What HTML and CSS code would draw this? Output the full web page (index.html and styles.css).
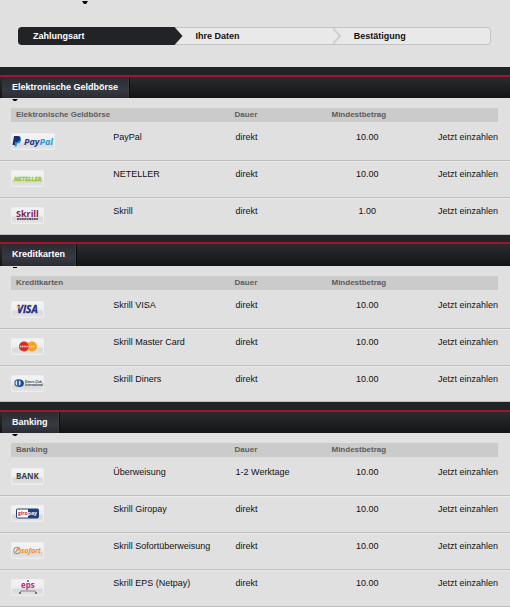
FILE: index.html
```html
<!DOCTYPE html>
<html lang="de">
<head>
  <meta charset="UTF-8" />
  <meta name="viewport" content="width=device-width, initial-scale=1.0"/>
  <title>Einzahlung | Zahlungsart</title>
  <link rel="stylesheet" href="styles.css">
</head>
<body>
  <!-- shared logo button background -->
  <svg class="defs" width="0" height="0" aria-hidden="true">
    <defs>
      <linearGradient id="plate" x1="0" y1="0" x2="0" y2="1">
        <stop offset="0" stop-color="#f4f4f4"/>
        <stop offset="0.5" stop-color="#eeeeee"/>
        <stop offset="0.65" stop-color="#d8d8d8"/>
        <stop offset="1" stop-color="#e6e6e6"/>
      </linearGradient>
    </defs>
  </svg>

  <header class="intro">
    <svg class="caret caret-top" viewBox="0 0 6 3" aria-hidden="true"><path d="M0 0h6L4 3H2z"/></svg>
    <ol class="steps">
      <li class="step active">Zahlungsart</li>
      <li class="step">Ihre Daten
        <svg class="chevron" viewBox="0 0 9 16" aria-hidden="true"><path d="M1 0L8 8L1 16" fill="none" stroke="#cfcfcf" stroke-width="2"/></svg>
      </li>
      <li class="step">Bestätigung</li>
    </ol>
  </header>

  <main>
    <section class="section">
      <div class="bar"><h2 class="tab">Elektronische Geldbörse</h2></div>
      <svg class="caret" viewBox="0 0 6 3" aria-hidden="true"><path d="M0 1h6L4 3H2z"/></svg>
      <table>
        <colgroup><col class="col-logo"><col class="col-name"><col class="col-time"><col class="col-amount"><col class="col-action"></colgroup>
        <thead>
          <tr><th colspan="2">Elektronische Geldbörse</th><th>Dauer</th><th>Mindestbetrag</th><th></th></tr>
        </thead>
        <tbody>
          <tr>
            <td class="logo">
              <svg width="44" height="17" viewBox="0 0 44 17" aria-hidden="true">
                <rect x="0.5" y="0.5" width="43" height="16" rx="1" fill="url(#plate)" stroke="#eee"/>
                <path d="M3 3h4q3 0 2.500 3Q9 9 6 9H4.500L4 12H1.500z" fill="#1d2f74"/>
                <path d="M9.500 5q1 1 .4 3Q9 10.500 6.500 10.500H6L5.500 13.500H3.500L4.500 9H6.500Q9 8.500 9.500 5z" fill="#1b8fd2"/>
                <text x="13" y="12" class="brand italic" font-size="9" fill="#243580">Pay<tspan fill="#2299d6">Pal</tspan></text>
              </svg>
            </td>
            <td>PayPal</td><td>direkt</td><td class="amount">10.00</td><td class="action"><a href="#paypal">Jetzt einzahlen</a></td>
          </tr>
          <tr>
            <td class="logo">
              <svg width="33" height="17" viewBox="0 0 33 17" aria-hidden="true">
                <rect x="0.5" y="0.5" width="32" height="16" rx="1" fill="url(#plate)" stroke="#eee"/>
                <text x="3" y="11" class="brand italic" font-size="6" fill="#8fc92f" stroke="#8fc92f" stroke-width="0.3">NETELLER</text>
              </svg>
            </td>
            <td>NETELLER</td><td>direkt</td><td class="amount">10.00</td><td class="action"><a href="#neteller">Jetzt einzahlen</a></td>
          </tr>
          <tr>
            <td class="logo">
              <svg width="33" height="17" viewBox="0 0 33 17" aria-hidden="true">
                <rect x="0.5" y="0.5" width="32" height="16" rx="1" fill="url(#plate)" stroke="#eee"/>
                <text x="5" y="10" class="brand" font-size="9" fill="#7c1d5c">Skrill</text>
                <path d="M6 12h21" stroke="#41333d" stroke-width="1.500" stroke-dasharray="2 .4"/>
              </svg>
            </td>
            <td>Skrill</td><td>direkt</td><td class="amount">1.00</td><td class="action"><a href="#skrill">Jetzt einzahlen</a></td>
          </tr>
        </tbody>
      </table>
    </section>

    <section class="section cards">
      <div class="bar"><h2 class="tab">Kreditkarten</h2></div>
      <svg class="caret" viewBox="0 0 6 3" aria-hidden="true"><path d="M1 1h4v1H1z"/></svg>
      <table>
        <colgroup><col class="col-logo"><col class="col-name"><col class="col-time"><col class="col-amount"><col class="col-action"></colgroup>
        <thead>
          <tr><th colspan="2">Kreditkarten</th><th>Dauer</th><th>Mindestbetrag</th><th></th></tr>
        </thead>
        <tbody>
          <tr>
            <td class="logo">
              <svg width="33" height="17" viewBox="0 0 33 17" aria-hidden="true">
                <rect x="0.5" y="0.5" width="32" height="16" rx="1" fill="url(#plate)" stroke="#eee"/>
                <text x="6" y="12" class="brand italic" font-size="10" fill="#1f2b87" stroke="#1f2b87" stroke-width="0.3">VISA</text>
                <path d="M5 5h3l1 3z" fill="#e9a52c"/>
              </svg>
            </td>
            <td>Skrill VISA</td><td>direkt</td><td class="amount">10.00</td><td class="action"><a href="#visa">Jetzt einzahlen</a></td>
          </tr>
          <tr>
            <td class="logo">
              <svg width="33" height="17" viewBox="0 0 33 17" aria-hidden="true">
                <rect x="0.5" y="0.5" width="32" height="16" rx="1" fill="url(#plate)" stroke="#eee"/>
                <circle cx="21" cy="8.500" r="5" fill="#f3a024"/>
                <circle cx="13" cy="8.500" r="5" fill="#d92b2b"/>
                <path d="M16.500 5h1.500M17 6.500h1.500M17 10.500h1.500M16.500 12h1.500" stroke="#f3a024"/>
                <path d="M9 8.500h15" stroke="#f6d5c2" stroke-width="1.500" stroke-dasharray="1.500 .6"/>
              </svg>
            </td>
            <td>Skrill Master Card</td><td>direkt</td><td class="amount">10.00</td><td class="action"><a href="#mastercard">Jetzt einzahlen</a></td>
          </tr>
          <tr>
            <td class="logo">
              <svg width="33" height="17" viewBox="0 0 33 17" aria-hidden="true">
                <rect x="0.5" y="0.5" width="32" height="16" rx="1" fill="url(#plate)" stroke="#eee"/>
                <path d="M7 4.500h2.500a4 3.800 0 0 1 0 7.500H7z" fill="#1b4688"/>
                <circle cx="7" cy="8" r="3.700" fill="#2d69ab"/>
                <path d="M6 5.500a2.800 2.800 0 0 0 0 5zM8 5.500a2.800 2.800 0 0 1 0 5z" fill="#e8edf3"/>
                <text x="14" y="8" font-size="3" font-weight="bold" fill="#33373f">Diners Club</text>
                <text x="14" y="11" font-size="3" font-weight="bold" fill="#33373f">International</text>
              </svg>
            </td>
            <td>Skrill Diners</td><td>direkt</td><td class="amount">10.00</td><td class="action"><a href="#diners">Jetzt einzahlen</a></td>
          </tr>
        </tbody>
      </table>
    </section>

    <section class="section">
      <div class="bar"><h2 class="tab">Banking</h2></div>
      <svg class="caret" viewBox="0 0 6 3" aria-hidden="true"><path d="M0 1h6L4 3H2z"/></svg>
      <table>
        <colgroup><col class="col-logo"><col class="col-name"><col class="col-time"><col class="col-amount"><col class="col-action"></colgroup>
        <thead>
          <tr><th colspan="2">Banking</th><th>Dauer</th><th>Mindestbetrag</th><th></th></tr>
        </thead>
        <tbody>
          <tr>
            <td class="logo">
              <svg width="33" height="17" viewBox="0 0 33 17" aria-hidden="true">
                <rect x="0.5" y="0.5" width="32" height="16" rx="1" fill="url(#plate)" stroke="#eee"/>
                <text x="5" y="11" class="brand" font-size="8" fill="#3a3d43">BANK</text>
              </svg>
            </td>
            <td>Überweisung</td><td>1-2 Werktage</td><td class="amount">10.00</td><td class="action"><a href="#bank">Jetzt einzahlen</a></td>
          </tr>
          <tr>
            <td class="logo">
              <svg width="33" height="17" viewBox="0 0 33 17" aria-hidden="true">
                <rect x="0.5" y="0.5" width="32" height="16" rx="1" fill="url(#plate)" stroke="#eee"/>
                <rect x="5.500" y="4" width="22" height="9" rx="1" fill="#fff" stroke="#1d4281"/>
                <path d="M17 4h10v9H17z" fill="#1d4281"/>
                <text x="7" y="10" class="brand" font-size="5" fill="#d4203a">giro<tspan fill="#fff">pay</tspan></text>
              </svg>
            </td>
            <td>Skrill Giropay</td><td>direkt</td><td class="amount">10.00</td><td class="action"><a href="#giropay">Jetzt einzahlen</a></td>
          </tr>
          <tr>
            <td class="logo">
              <svg width="33" height="17" viewBox="0 0 33 17" aria-hidden="true">
                <rect x="0.5" y="0.5" width="32" height="16" rx="1" fill="url(#plate)" stroke="#eee"/>
                <circle cx="6" cy="8.500" r="3.300" fill="none" stroke="#93857a"/>
                <path d="M4.500 10L8 5.500M5 8h3" stroke="#e8892b" stroke-width="1.200"/>
                <text x="10" y="11" class="brand italic" font-size="7" fill="#ee8a1d">sofort</text>
              </svg>
            </td>
            <td>Skrill Sofortüberweisung</td><td>direkt</td><td class="amount">10.00</td><td class="action"><a href="#sofort">Jetzt einzahlen</a></td>
          </tr>
          <tr>
            <td class="logo">
              <svg width="33" height="17" viewBox="0 0 33 17" aria-hidden="true">
                <rect x="0.5" y="0.5" width="32" height="16" rx="1" fill="url(#plate)" stroke="#eee"/>
                <text x="10" y="9" class="brand" font-size="8" fill="#c4258a">eps</text>
                <path d="M9 14l1-2h14l1 2" fill="none" stroke="#8b8590"/>
                <path d="M16 2h2M8 14h2M24 14h2" stroke="#5b5560" stroke-width="1.500"/>
              </svg>
            </td>
            <td>Skrill EPS (Netpay)</td><td>direkt</td><td class="amount">10.00</td><td class="action"><a href="#eps">Jetzt einzahlen</a></td>
          </tr>
        </tbody>
      </table>
    </section>
  </main>
</body>
</html>
```
FILE: styles.css
```css
body {
  margin: 0;
  background-color: #e0e0e0;
  color: #111;
  font-family: "Liberation Sans", Arial, sans-serif;
  font-size: 9px;
  line-height: 11px;
}
.defs {
  position: absolute;
}
.intro {
  padding: 1px 19px 22px 18px;
}
.caret {
  display: block;
  width: 6px;
  height: 3px;
  margin: 0 0 7px 12px;
}
.caret-top {
  margin: 0 0 23px 64px;
}

/* progress steps */
.steps {
  display: flex;
  margin: 0;
  padding: 0;
  list-style: none;
  height: 16px;
  border: 1px solid #c4c4c4;
  border-radius: 4px;
  background-color: #e9e9e9;
}
.step {
  display: flex;
  align-items: center;
  justify-content: space-between;
  flex: 33;
  padding-left: 13px;
  font-weight: bold;
  font-size: 9px;
}
.step:last-child {
  flex: 31;
}
.step.active {
  flex: 34;
  margin: -1px 0 -1px -1px;
  padding-left: 15px;
  border-radius: 4px 0 0 4px;
  background-color: #212327;
  color: #fff;
  clip-path: polygon(0 0, calc(100% - 8px) 0, 100% 50%, calc(100% - 8px) 100%, 0 100%);
}
.chevron {
  width: 9px;
  height: 16px;
}

/* section title bar */
.section {
  border-top: 8px solid #222326;
}
.bar {
  display: flex;
  height: 21px;
  padding-left: 2px;
  border-top: 2px solid #a5142c;
  background-image: linear-gradient(#2b2c2e, #131416);
}
.cards {
  border-top-width: 7px;
}
.cards .bar {
  height: 22px;
}
.tab {
  margin: 0;
  padding: 0 11px 0 10px;
  border-right: 1px solid #0c0d0e;
  background-image: linear-gradient(#2b2c30, #363942 60%, #2a2c32);
  box-shadow: inset -1px 0 #3a3c41;
  color: #fff;
  font-size: 9px;
  line-height: 21px;
}

table {
  width: 100%;
  table-layout: fixed;
  border-collapse: separate;
  border-spacing: 0;
}
.col-logo {
  width: 22%;
}
.col-name {
  width: 24%;
}
.col-time {
  width: 19%;
}
.col-amount {
  width: 14%;
}
.col-action {
  width: 21%;
}
th {
  height: 14px;
  padding: 0;
  border-bottom: 2px solid transparent;
  background-color: #cbcbcb;
  background-clip: padding-box;
  color: #5c5c5c;
  font-size: 8px;
  line-height: 14px;
  text-align: left;
  white-space: nowrap;
}
th:first-child {
  padding-left: 5px;
  border-left: 11px solid transparent;
}
th:last-child {
  border-right: 12px solid transparent;
}
td {
  box-sizing: border-box;
  height: 37px;
  padding: 7px 0 0 1px;
  border-top: 1px solid #ebebeb;
  border-bottom: 1px solid #bebebe;
  vertical-align: top;
  white-space: nowrap;
}
tr:first-child td {
  border-top-color: transparent;
}
.cards tr:last-child td {
  height: 36px;
}
.logo {
  padding: 8px 0 0 11px;
}
.logo svg {
  display: block;
}
.amount {
  padding-left: 0;
  text-align: center;
}
.action {
  padding-right: 12px;
  text-align: right;
}
.action a {
  color: inherit;
  text-decoration: none;
}
.action a:hover {
  text-decoration: underline;
}
.brand {
  font-family: "Open Sans", "Liberation Sans", sans-serif;
  font-weight: bold;
}
.italic {
  font-style: italic;
}
```
